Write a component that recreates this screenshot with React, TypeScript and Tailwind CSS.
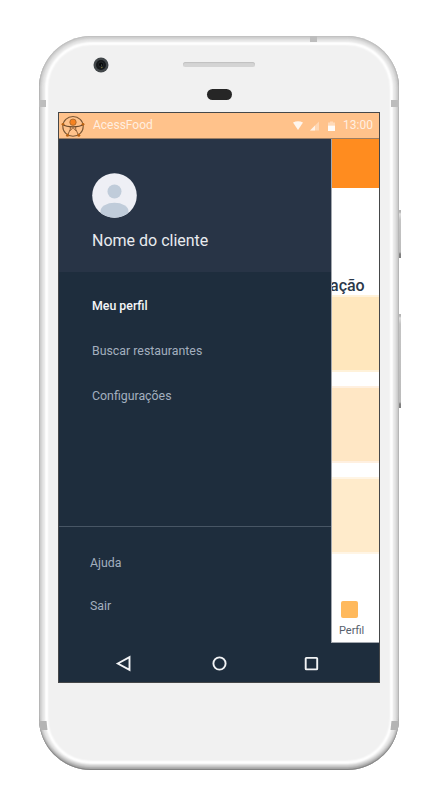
import React from "react";

const bezel =
  "shadow-[inset_0_-1px_1px_#7f7f7f,inset_0_-3px_2px_#a8a8a8,inset_0_-5px_2px_#cfcfcf,inset_0_0_1px_1px_#c0c0c0,inset_0_0_2px_3px_#cfcfcf,inset_0_0_2px_6px_#e6e6e6,inset_0_0_2px_9px_#ffffff]";

function Logo() {
  return (
    <svg className="h-[23px] w-[24px] shrink-0" viewBox="0 0 24 23" fill="none">
      <ellipse cx="12" cy="11.4" rx="10.2" ry="9.9" stroke="#7c5836" strokeWidth="1.1" />
      <path d="M1.8 9.5C6 12.6 18 12.6 22.2 9.5" stroke="#6b4a2d" strokeWidth="1.1" />
      <path d="M9.3 11.8v2.4L6.5 20.5M14.7 11.8v2.4l3 6.3M8.8 16L12 12.6 15.2 16" stroke="#81542c" strokeWidth=".9" />
      <circle cx="12" cy="7.2" r="3.2" fill="#f58220" stroke="#a0642c" strokeWidth=".8" />
      <g fill="#b96315">
        <circle cx="2" cy="9.3" r="1.4" />
        <circle cx="22" cy="9.3" r="1.4" />
        <circle cx="6.5" cy="20.3" r="1.5" />
        <circle cx="17.8" cy="20.3" r="1.5" />
      </g>
    </svg>
  );
}

function StatusBar() {
  return (
    <header className="flex h-[26px] shrink-0 items-start border-b border-[#9b7d63] bg-[#ffc28b] text-white/75">
      <div className="ml-[2px] mt-[2px] flex">
        <Logo />
      </div>
      <span className="ml-[8px] mt-[4px] text-[12px] leading-4">AcessFood</span>
      <svg className="ml-auto mt-[8px] h-[12px] w-[44px] text-white" viewBox="0 0 44 12" fill="currentColor">
        <path d="M0 1.5Q5-1.2 10 1.5L5 9Z" opacity=".85" />
        <path d="M17 9.5L26 .5V9.5Z" opacity=".35" />
        <path d="M17 9.5L22 4.5V9.5Z" opacity=".7" />
        <path d="M37 .5h3v1h2v3h-7v-3h2z" opacity=".4" />
        <path d="M35 4.5h7v5.5h-7z" opacity=".95" />
      </svg>
      <span className="ml-[6px] mr-[6px] mt-[4px] text-[12px] leading-4">13:00</span>
    </header>
  );
}

function Drawer() {
  return (
    <aside className="flex w-[272px] shrink-0 flex-col bg-[#1e2d3d] text-[12.35px] leading-4 text-[#a3afbf]">
      <div className="flex h-[133px] shrink-0 flex-col bg-[#283446] pl-[33px] pt-[34px]">
        <svg className="h-[45px] w-[45px]" viewBox="0 0 45 45">
          <clipPath id="avatar">
            <circle cx="22.5" cy="22.5" r="22.3" />
          </clipPath>
          <g clipPath="url(#avatar)">
            <path fill="#eeeff5" d="M0 0h45v45H0z" />
            <circle cx="22.5" cy="18.5" r="7" fill="#c0ccda" />
            <ellipse cx="22.5" cy="38" rx="14" ry="8.3" fill="#c0ccda" />
          </g>
        </svg>
        <h1 className="mt-[13px] text-[16px] leading-5 text-[#e9ebef]">Nome do cliente</h1>
      </div>
      <nav className="flex flex-col gap-[29px] pl-[33px] pt-[26px]">
        <a className="font-medium text-[#f5f6f8]">Meu perfil</a>
        <a>Buscar restaurantes</a>
        <a>Configurações</a>
      </nav>
      <nav className="mt-auto flex h-[117px] flex-col gap-[27px] border-t border-[#485665] pl-[31px] pt-[28px]">
        <a>Ajuda</a>
        <a>Sair</a>
      </nav>
    </aside>
  );
}

function AppBehind() {
  return (
    <main className="flex min-w-0 flex-1 flex-col overflow-hidden border-b border-l border-[#a2a7ae] bg-white">
      <div className="h-[49px] shrink-0 bg-[#ff8c1f]" />
      <h2 className="-ml-[2px] mt-[87px] h-[20px] text-[16px] font-medium leading-[22px] text-[#2b384a]">ação</h2>
      <div className="h-[77px] border-y-2 border-[#fff2da] bg-[#ffe7bd]" />
      <div className="mt-[14px] h-[77px] border-y-2 border-[#fff0e0] bg-[#ffe7c5]" />
      <div className="mt-[14px] h-[77px] border-y-2 border-[#fff5e5] bg-[#ffebcb]" />
      <div className="ml-[9px] mt-[47px] h-[17px] w-[17px] rounded-[2px] bg-[#ffb95c]" />
      <span className="ml-[7px] mt-[6px] text-[11px] leading-[14px] text-[#56606c]">Perfil</span>
    </main>
  );
}

export default function App() {
  return (
    <div className="relative h-[797px] w-[426px] overflow-hidden bg-white pl-[39px] pt-[36px] font-['Roboto',sans-serif]">
      <div className="absolute left-[397px] top-[210px] h-[48px] w-[4px] bg-[linear-gradient(#b5b5b5_0_2px,#e0e0e0_4px,#c4c4c4_10px,#bcbcbc_42px,#808080_44px)]" />
      <div className="absolute left-[397px] top-[314px] h-[94px] w-[4px] bg-[linear-gradient(#b5b5b5_0_2px,#e0e0e0_4px,#c4c4c4_10px,#bcbcbc_88px,#808080_90px)]" />
      <div className={"relative flex h-[734px] w-[360px] flex-col overflow-hidden rounded-[52px] bg-[#f1f1f1] px-[19px] " + bezel}>
        <div className="absolute left-0 top-[64px] h-[7px] w-[7px] bg-[#bdbdbd]" />
        <div className="absolute right-0 top-[64px] h-[7px] w-[8px] bg-[#bdbdbd]" />
        <div className="absolute left-[271px] top-0 h-[6px] w-[7px] bg-[#bdbdbd]" />
        <div className="absolute left-0 top-[685px] h-[9px] w-[8px] skew-x-6 bg-[#b4b4b4]" />
        <div className="absolute right-0 top-[685px] h-[9px] w-[8px] -skew-x-6 bg-[#b4b4b4]" />
        <div className="flex h-[76px] shrink-0">
          <svg className="ml-[35px] mt-[21px] h-[16px] w-[16px]" viewBox="0 0 16 16">
            <circle cx="8" cy="8" r="7.5" fill="#42474a" />
            <circle cx="8" cy="8" r="5" fill="#171a1c" />
            <circle cx="8" cy="7.5" r="2.5" fill="#07090a" stroke="#303639" strokeWidth=".6" />
            <circle cx="8.5" cy="8" r=".6" fill="#687574" />
            <circle cx="8.8" cy="10.5" r=".8" fill="#77733a" />
          </svg>
          <div className="ml-[74px] flex w-[72px] flex-col items-center pt-[26px]">
            <div className="h-[5px] w-full rounded-full bg-[#d4d4d4] shadow-[inset_0_1px_1px_#c0c0c0]" />
            <div className="mt-[22px] h-[11px] w-[25px] rounded-full bg-[#262626]" />
          </div>
        </div>
        <section className="flex h-[571px] w-[322px] shrink-0 flex-col overflow-hidden border border-[#454749] bg-[#1e2d3d]">
          <StatusBar />
          <div className="flex h-[504px] shrink-0">
            <Drawer />
            <AppBehind />
          </div>
          <svg className="h-[39px] w-[320px] shrink-0" viewBox="0 0 320 39" fill="none" stroke="#f2f3f5" strokeWidth="1.9">
            <path d="M58.8 20.5L70.5 14.2V26.8Z" />
            <circle cx="160.5" cy="20.5" r="6.1" />
            <rect x="246.7" y="14.9" width="11.5" height="11.5" rx=".7" />
          </svg>
        </section>
      </div>
    </div>
  );
}
